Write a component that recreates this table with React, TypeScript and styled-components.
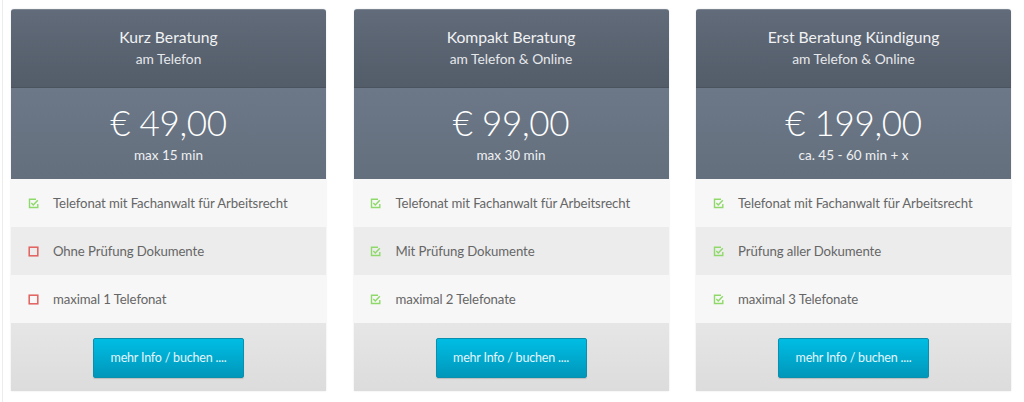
import React from "react";
import styled, { createGlobalStyle } from "styled-components";

const Global = createGlobalStyle`
  html, body { margin: 0; padding: 0; background: #fff; }
  body { font-family: Lato, "Open Sans", sans-serif; }
`;

const Page = styled.div`
  width: 1022px;
  height: 402px;
  box-sizing: border-box;
  padding: 9px 0 0 8px;
  border-left: 1px solid #ececec;
  margin-left: 2px;
  display: grid;
  grid-template-columns: repeat(3, 315px);
  column-gap: 27.5px;
  align-items: start;
`;

const Card = styled.div`
  display: flex;
  flex-direction: column;
  border-radius: 3px 3px 0 0;
  overflow: hidden;
  box-shadow: 0 0 2px rgba(0, 0, 0, 0.12);
`;

const Header = styled.div`
  height: 79px;
  box-sizing: border-box;
  padding-top: 17px;
  background: linear-gradient(#616b79, #535c69);
  border-top: 1px solid #7b8592;
  border-bottom: 1px solid #4b535e;
  text-align: center;
  color: #f1f2f4;
`;

const Title = styled.div`
  font-size: 15.7px;
  line-height: 20px;
`;

const Subtitle = styled.div`
  font-size: 13.8px;
  line-height: 18px;
  margin-top: 3px;
  color: #e6e8eb;
`;

const PriceBox = styled.div`
  height: 91px;
  box-sizing: border-box;
  padding-top: 13px;
  background: linear-gradient(#6c7888, #646f7d);
  text-align: center;
  color: #fff;
`;

const Price = styled.div`
  font-size: 35px;
  font-weight: 300;
  line-height: 42px;
  letter-spacing: -0.3px;
`;

const Duration = styled.div`
  font-size: 13.5px;
  line-height: 18px;
  margin-top: 3px;
  color: #eef0f2;
`;

const Row = styled.div<{ $alt?: boolean }>`
  height: 48px;
  display: flex;
  align-items: center;
  padding-left: 16px;
  gap: 14px;
  background: ${(p) => (p.$alt ? "#ececec" : "#f7f7f7")};
  color: #666;
  font-size: 13.2px;
  letter-spacing: -0.1px;
`;

const IconBox = styled.span`
  width: 12px;
  height: 12px;
  display: inline-flex;
  align-items: center;
  justify-content: center;
`;

const Footer = styled.div`
  height: 68px;
  display: flex;
  align-items: center;
  justify-content: center;
  background: linear-gradient(#e6e6e6, #dcdcdc);
`;

const Button = styled.button`
  width: 151px;
  height: 40px;
  border: 1px solid #0b8fae;
  border-radius: 2px;
  background: linear-gradient(#00bde4, #0097ba);
  color: #e3f5fa;
  font-family: Lato, "Open Sans", sans-serif;
  font-size: 12.5px;
  letter-spacing: -0.2px;
  box-shadow: 0 1px 1px rgba(0, 0, 0, 0.15);
  cursor: pointer;
  margin-top: 1px;
`;

const Check = () => (
  <svg width="11" height="11" viewBox="0 0 11 11">
    <path d="M8 1.2H1.5v8.3h8.3V6" fill="none" stroke="#8fd96a" strokeWidth="1.4" />
    <path d="M3.3 5l2 2 4.5-4.8" fill="none" stroke="#8fd96a" strokeWidth="1.5" />
  </svg>
);

const Cross = () => (
  <svg width="11" height="11" viewBox="0 0 11 11">
    <rect x="1.2" y="1.2" width="8.6" height="8.6" fill="none" stroke="#e2605d" strokeWidth="1.5" />
  </svg>
);

type Feature = { ok: boolean; text: string };
type Plan = { title: string; sub: string; price: string; dur: string; features: Feature[] };

const plans: Plan[] = [
  {
    title: "Kurz Beratung",
    sub: "am Telefon",
    price: "€ 49,00",
    dur: "max 15 min",
    features: [
      { ok: true, text: "Telefonat mit Fachanwalt für Arbeitsrecht" },
      { ok: false, text: "Ohne Prüfung Dokumente" },
      { ok: false, text: "maximal 1 Telefonat" },
    ],
  },
  {
    title: "Kompakt Beratung",
    sub: "am Telefon & Online",
    price: "€ 99,00",
    dur: "max 30 min",
    features: [
      { ok: true, text: "Telefonat mit Fachanwalt für Arbeitsrecht" },
      { ok: true, text: "Mit Prüfung Dokumente" },
      { ok: true, text: "maximal 2 Telefonate" },
    ],
  },
  {
    title: "Erst Beratung Kündigung",
    sub: "am Telefon & Online",
    price: "€ 199,00",
    dur: "ca. 45 - 60 min + x",
    features: [
      { ok: true, text: "Telefonat mit Fachanwalt für Arbeitsrecht" },
      { ok: true, text: "Prüfung aller Dokumente" },
      { ok: true, text: "maximal 3 Telefonate" },
    ],
  },
];

export default function App() {
  return (
    <>
      <Global />
      <Page>
        {plans.map((p) => (
          <Card key={p.title}>
            <Header>
              <Title>{p.title}</Title>
              <Subtitle>{p.sub}</Subtitle>
            </Header>
            <PriceBox>
              <Price>{p.price}</Price>
              <Duration>{p.dur}</Duration>
            </PriceBox>
            {p.features.map((f, i) => (
              <Row key={f.text} $alt={i === 1}>
                <IconBox>{f.ok ? <Check /> : <Cross />}</IconBox>
                <span>{f.text}</span>
              </Row>
            ))}
            <Footer>
              <Button>mehr Info / buchen ....</Button>
            </Footer>
          </Card>
        ))}
      </Page>
    </>
  );
}
